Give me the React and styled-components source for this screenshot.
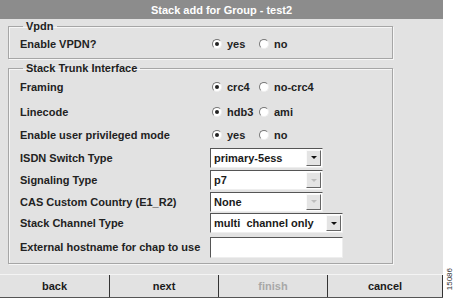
import styled, { createGlobalStyle } from 'styled-components';

const Global = createGlobalStyle`
  html, body {
    margin: 0;
    padding: 0;
    background: #ffffff;
  }
  body {
    font-family: "Liberation Sans", Arial, sans-serif;
  }
`;

const Page = styled.div`
  display: flex;
  width: 456px;
  height: 298px;
  background: #fff;
`;

const Win = styled.div`
  width: 443px;
  height: 298px;
  background: #e2e2e2;
  display: flex;
  flex-direction: column;
`;

const Title = styled.div`
  height: 19px;
  background: #8c8c8c;
  color: #fff;
  font-weight: bold;
  font-size: 11px;
  display: flex;
  align-items: center;
  justify-content: center;
`;

const Body = styled.div`
  flex: 1;
  padding: 0 50px 0 8px;
`;

const Group = styled.fieldset`
  margin: ${(p) => p.$top}px 0 0 0;
  padding: 0 0 ${(p) => p.$bottom}px 11px;
  border: 1px solid #a6a6a6;
  box-shadow: inset 1px 1px 0 #f6f6f6, 1px 1px 0 #f6f6f6;
  display: flex;
  flex-direction: column;
`;

const Legend = styled.legend`
  margin-left: 3px;
  padding: 0 3px;
  font-size: 11px;
  font-weight: bold;
  color: #1e1e1e;
  line-height: 12px;
`;

const Row = styled.div`
  display: flex;
  align-items: center;
  height: ${(p) => p.$h}px;
`;

const Label = styled.div`
  width: 190px;
  font-size: 11px;
  font-weight: bold;
  color: #222;
`;

const Radios = styled.div`
  display: flex;
  align-items: center;
  padding-left: 2px;
`;

const Option = styled.div`
  display: flex;
  align-items: center;
  gap: 5px;
  width: ${(p) => p.$w}px;
  font-size: 11px;
  font-weight: bold;
  color: #222;
`;

const Dot = styled.span`
  position: relative;
  width: 8px;
  height: 8px;
  border-radius: 50%;
  background: #fff;
  border: 1px solid;
  border-color: #777 #eee #eee #777;
  &::after {
    content: '';
    display: ${(p) => (p.$on ? 'block' : 'none')};
    position: absolute;
    left: 2px;
    top: 2px;
    width: 4px;
    height: 4px;
    border-radius: 50%;
    background: #222;
  }
`;

const Select = styled.div`
  display: flex;
  align-items: stretch;
  box-sizing: border-box;
  width: ${(p) => p.$w}px;
  height: 20px;
  background: #fff;
  border: 1px solid;
  border-color: #555 #eee #eee #555;
`;

const Value = styled.div`
  flex: 1;
  display: flex;
  align-items: center;
  padding-left: 3px;
  font-size: 11px;
  font-weight: bold;
  color: #1a1a1a;
  white-space: pre;
`;

const Arrow = styled.div`
  width: 13px;
  margin: 1px;
  background: #e4e4e4;
  border: 1px solid;
  border-color: #fafafa #666 #666 #fafafa;
  display: flex;
  align-items: center;
  justify-content: center;
  &::after {
    content: '';
    border-left: 3px solid transparent;
    border-right: 3px solid transparent;
    border-top: 3px solid ${(p) => (p.$off ? '#bdbdbd' : '#111')};
  }
`;

const TextBox = styled.div`
  box-sizing: border-box;
  width: 133px;
  height: 21px;
  background: #fff;
  border: 1px solid;
  border-color: #555 #eee #eee #555;
`;

const Bar = styled.div`
  display: flex;
  height: 22px;
  border-top: 1px solid #f4f4f4;
  border-bottom: 1px solid #555;
`;

const Btn = styled.div`
  width: ${(p) => p.$w}px;
  display: flex;
  align-items: center;
  justify-content: center;
  font-size: 11px;
  font-weight: bold;
  color: ${(p) => (p.$off ? '#a8a8a8' : '#1a1a1a')};
  border-right: 1px solid #333;
  box-sizing: border-box;
`;

const Side = styled.div`
  flex: 1;
  display: flex;
  align-items: flex-end;
  justify-content: center;
  padding-bottom: 8px;
`;

const Code = styled.div`
  writing-mode: vertical-rl;
  transform: rotate(180deg);
  font-size: 8px;
  color: #333;
`;

function Radio({ items, sel }) {
  return (
    <Radios>
      {items.map((t, i) => (
        <Option key={t} $w={i === 0 ? 47 : 60}>
          <Dot $on={i === sel} />
          {t}
        </Option>
      ))}
    </Radios>
  );
}

function Drop({ value, w = 113, off }) {
  return (
    <Select $w={w}>
      <Value>{value}</Value>
      <Arrow $off={off} />
    </Select>
  );
}

export default function App() {
  return (
    <>
      <Global />
      <Page>
        <Win>
          <Title>Stack add for Group - test2</Title>
          <Body>
            <Group $top={1} $bottom={2}>
              <Legend>Vpdn</Legend>
              <Row $h={24}>
                <Label>Enable VPDN?</Label>
                <Radio items={['yes', 'no']} sel={0} />
              </Row>
            </Group>
            <Group $top={3} $bottom={3}>
              <Legend>Stack Trunk Interface</Legend>
              <Row $h={25}>
                <Label>Framing</Label>
                <Radio items={['crc4', 'no-crc4']} sel={0} />
              </Row>
              <Row $h={25}>
                <Label>Linecode</Label>
                <Radio items={['hdb3', 'ami']} sel={0} />
              </Row>
              <Row $h={22}>
                <Label>Enable user privileged mode</Label>
                <Radio items={['yes', 'no']} sel={0} />
              </Row>
              <Row $h={23}>
                <Label>ISDN Switch Type</Label>
                <Drop value="primary-5ess" />
              </Row>
              <Row $h={22}>
                <Label>Signaling Type</Label>
                <Drop value="p7" off />
              </Row>
              <Row $h={21}>
                <Label>CAS Custom Country (E1_R2)</Label>
                <Drop value="None" off />
              </Row>
              <Row $h={22}>
                <Label>Stack Channel Type</Label>
                <Drop value="multi  channel only" w={133} />
              </Row>
              <Row $h={26}>
                <Label>External hostname for chap to use</Label>
                <TextBox />
              </Row>
            </Group>
          </Body>
          <Bar>
            <Btn $w={110}>back</Btn>
            <Btn $w={109}>next</Btn>
            <Btn $w={109} $off>finish</Btn>
            <Btn $w={115}>cancel</Btn>
          </Bar>
        </Win>
        <Side>
          <Code>15086</Code>
        </Side>
      </Page>
    </>
  );
}
